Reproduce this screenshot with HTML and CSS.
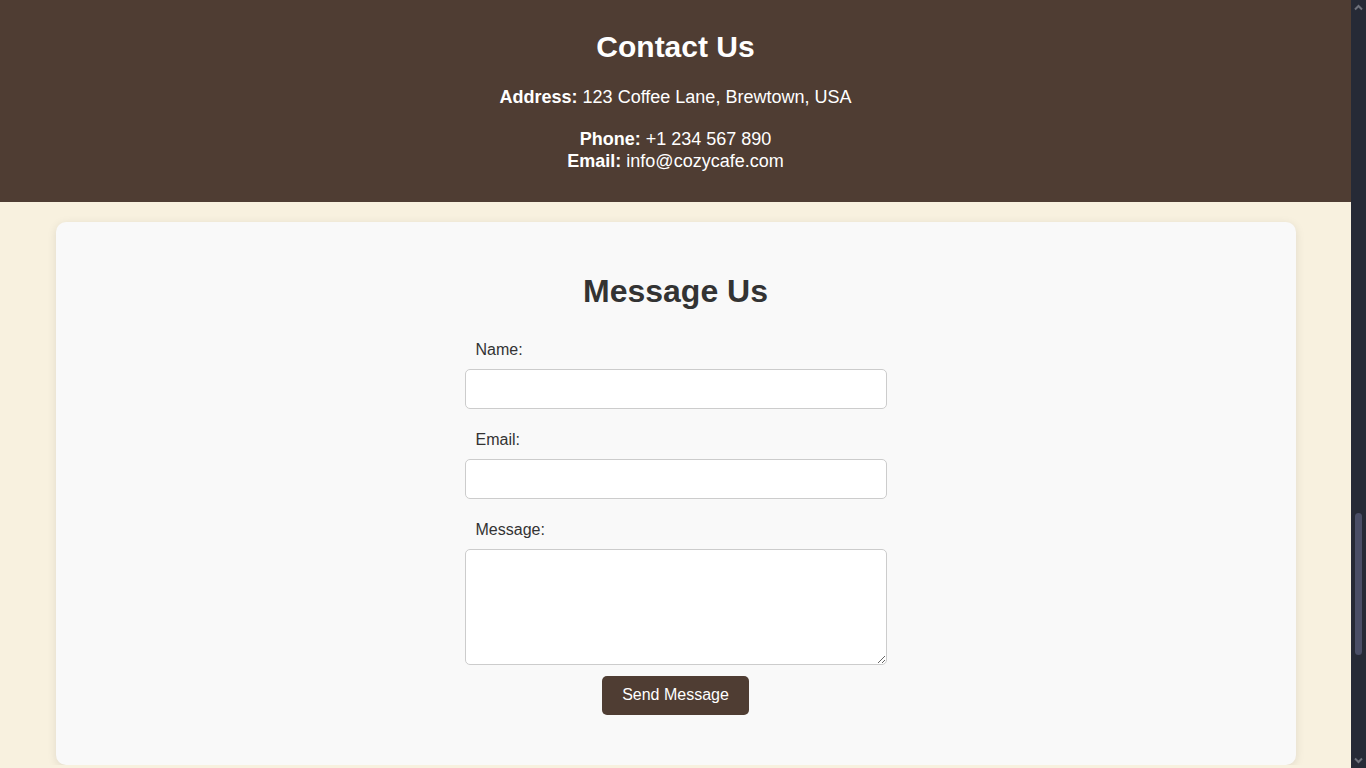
FILE: index.html
```html
<!DOCTYPE html>
<html lang="en">
<head>
<meta charset="utf-8">
<title>Contact - Cozy Cafe</title>
<link rel="stylesheet" href="styles.css">
</head>
<body>
  <main class="page">
    <section class="contact">
      <h2 class="contact-title">Contact Us</h2>
      <p class="contact-line"><strong>Address:</strong> 123 Coffee Lane, Brewtown, USA</p>
      <p class="contact-line"><strong>Phone:</strong> +1 234 567 890<br><strong>Email:</strong> info@cozycafe.com</p>
    </section>
    <section class="card">
      <h2 class="card-title">Message Us</h2>
      <form class="form">
        <label class="field-label" for="name">Name:</label>
        <input class="field" id="name" type="text">
        <label class="field-label" for="email">Email:</label>
        <input class="field" id="email" type="email">
        <label class="field-label" for="message">Message:</label>
        <textarea class="field field-area" id="message"></textarea>
        <button class="send" type="button">Send Message</button>
      </form>
    </section>
  </main>
  <div class="scrollbar" aria-hidden="true">
    <svg class="sb-arrow" width="15" height="15" viewBox="0 0 15 15"><path d="M4 9.5 L7.5 6 L11 9.5" fill="none" stroke="#6f727c" stroke-width="2"/></svg>
    <div class="sb-track"><div class="sb-thumb"></div></div>
    <svg class="sb-arrow" width="15" height="15" viewBox="0 0 15 15"><path d="M4 5.5 L7.5 9 L11 5.5" fill="none" stroke="#6f727c" stroke-width="2"/></svg>
  </div>
</body>
</html>
```
FILE: styles.css
```css
body {
  margin: 0;
  background: #f8f1df;
  font-family: "Liberation Sans", Arial, sans-serif;
  color: #333;
  overflow: hidden;
}

.page {
  margin-right: 15px;
}

.contact {
  background: #4f3d33;
  color: #fff;
  text-align: center;
  padding: 29px 20px 29px;
}

.contact-title {
  margin: 0 0 21px;
  font-size: 30px;
  line-height: 36px;
  font-weight: bold;
}

.contact-line {
  margin: 0 0 19px;
  font-size: 18px;
  line-height: 22.5px;
}

.contact-line:last-child {
  margin-bottom: 0;
}

.card {
  box-sizing: border-box;
  max-width: 1240px;
  margin: 20px auto 0;
  padding: 51px 20px 50px;
  background: #f9f9f9;
  border-radius: 10px;
  box-shadow: 0 2px 10px rgba(0, 0, 0, 0.1);
}

.card-title {
  margin: 0 0 31px;
  text-align: center;
  font-size: 32px;
  font-weight: bold;
  color: #333;
}

.form {
  width: 422px;
  margin: 0 auto;
  display: flex;
  flex-direction: column;
}

.field-label {
  display: block;
  padding-left: 11px;
  margin-bottom: 10px;
  font-size: 16px;
  color: #333;
}

.field {
  box-sizing: border-box;
  display: block;
  width: 100%;
  height: 40px;
  margin: 0 0 22px;
  padding: 10px;
  border: 1px solid #ccc;
  border-radius: 5px;
  background: #fff;
  font-family: "Liberation Sans", Arial, sans-serif;
  font-size: 16px;
}

.field-area {
  height: 116px;
  margin-bottom: 11px;
  resize: vertical;
}

.send {
  align-self: center;
  height: 39px;
  padding: 0 20px;
  border: none;
  border-radius: 5px;
  background: #4f3d33;
  color: #fff;
  font-family: "Liberation Sans", Arial, sans-serif;
  font-size: 16px;
  cursor: pointer;
}

.scrollbar {
  position: fixed;
  top: 0;
  right: 0;
  width: 15px;
  height: 100vh;
  background: #262a36;
  display: flex;
  flex-direction: column;
}

.sb-arrow {
  display: block;
  flex: none;
}

.sb-track {
  flex: 1;
  position: relative;
}

.sb-thumb {
  position: absolute;
  left: 4px;
  width: 7px;
  top: 498px;
  height: 142px;
  border-radius: 4px;
  background: #4a4e66;
}
```
